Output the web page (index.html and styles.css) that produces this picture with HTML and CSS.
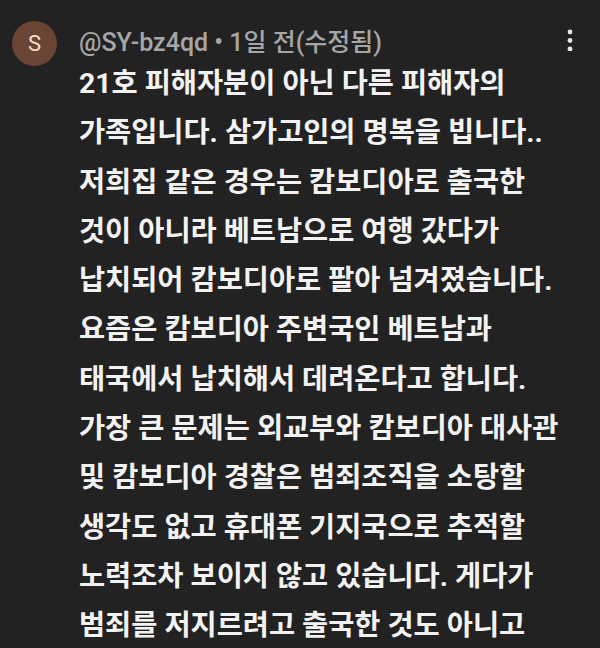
FILE: index.html
```html
<!DOCTYPE html>
<html lang="ko">
<head>
<meta charset="utf-8">
<link rel="stylesheet" href="styles.css">
</head>
<body>
<div class="comment">
  <div class="avatar">S</div>
  <div class="content">
    <div class="header">
      <span class="meta">@SY-bz4qd • 1일 전(수정됨)</span>
      <svg class="menu" width="6" height="22" viewBox="0 0 6 22">
        <circle cx="3" cy="3" r="2.4" fill="#e6e6e6"/>
        <circle cx="3" cy="11.5" r="2.4" fill="#e6e6e6"/>
        <circle cx="3" cy="20" r="2.4" fill="#e6e6e6"/>
      </svg>
    </div>
    <div class="text">
      <div class="line">21호 피해자분이 아닌 다른 피해자의</div>
      <div class="line">가족입니다. 삼가고인의 명복을 빕니다..</div>
      <div class="line">저희집 같은 경우는 캄보디아로 출국한</div>
      <div class="line">것이 아니라 베트남으로 여행 갔다가</div>
      <div class="line">납치되어 캄보디아로 팔아 넘겨졌습니다.</div>
      <div class="line">요즘은 캄보디아 주변국인 베트남과</div>
      <div class="line">태국에서 납치해서 데려온다고 합니다.</div>
      <div class="line">가장 큰 문제는 외교부와 캄보디아 대사관</div>
      <div class="line">및 캄보디아 경찰은 범죄조직을 소탕할</div>
      <div class="line">생각도 없고 휴대폰 기지국으로 추적할</div>
      <div class="line">노력조차 보이지 않고 있습니다. 게다가</div>
      <div class="line">범죄를 저지르려고 출국한 것도 아니고</div>
    </div>
  </div>
</div>
</body>
</html>
```
FILE: styles.css
```css
html, body {
  margin: 0;
  padding: 0;
  background: #222222;
  height: 100%;
  overflow: hidden;
}
body {
  font-family: Roboto, "Noto Sans CJK KR", sans-serif;
  color: #f2f2f2;
}
.comment {
  display: flex;
  gap: 22px;
  padding: 21px 0 0 12px;
}
.avatar {
  flex: 0 0 auto;
  width: 45px;
  height: 45px;
  border-radius: 50%;
  background: #6a4536;
  color: #f3dcd3;
  font-size: 22px;
  display: flex;
  align-items: center;
  justify-content: center;
  font-family: Roboto, sans-serif;
}
.content {
  flex: 1;
  min-width: 0;
}
.header {
  display: flex;
  align-items: center;
  justify-content: space-between;
  height: 38px;
  padding-right: 27px;
}
.meta {
  font-size: 25px;
  color: #a6a6a6;
  font-weight: 500;
  font-family: Roboto, "Noto Sans CJK KR", sans-serif;
}
.menu {
  display: block;
}
.text {
  margin-top: 0;
  font-size: 28.4px;
  line-height: 49.3px;
  font-weight: 700;
  font-family: Roboto, "Noto Sans CJK KR", sans-serif;
  white-space: nowrap;
}
```
